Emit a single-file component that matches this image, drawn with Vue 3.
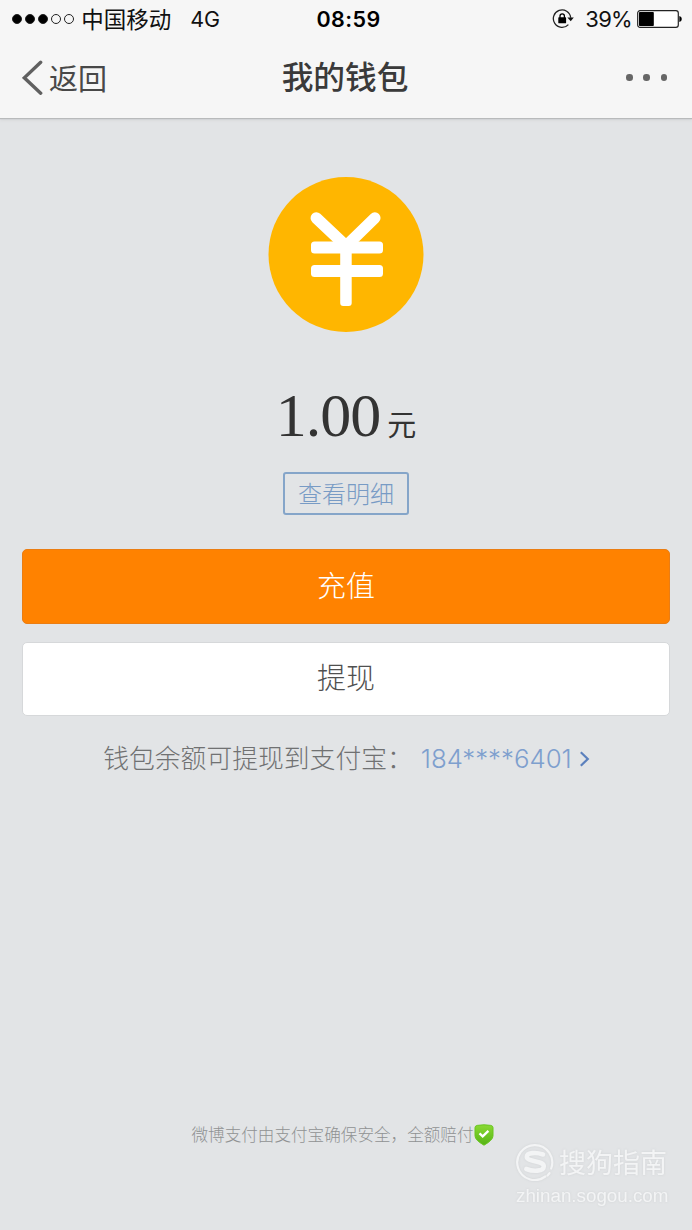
<script setup>
const signals = [true, true, true, false, false]
const battery = 39
</script>

<template>
  <div class="screen">
    <header class="header">
      <div class="status">
        <div class="side">
          <div class="signals">
            <i v-for="(on, n) in signals" :key="n" class="signal" :class="{ on }"></i>
          </div>
          <span class="carrier">中国移动</span>
          <span class="network">4G</span>
        </div>
        <span class="clock">08:59</span>
        <div class="side right">
          <svg class="lock" width="22" height="20" viewBox="0 0 22 20">
            <path d="M16.400 15.600A8.700 8.700 0 1 1 18.700 8.700" fill="none" stroke="#222" stroke-width="1.300" />
            <path d="M15.400 8.400h6.400l-3.100 3.800z" fill="#111" />
            <rect x="6.300" y="8.300" width="7.800" height="6" rx=".6" fill="#000" />
            <path d="M8 9V7a2.200 2.200 0 0 1 4.400 0v2" fill="none" stroke="#000" stroke-width="1.300" />
          </svg>
          <span class="percent">{{ battery }}%</span>
          <svg class="battery" width="46" height="18" viewBox="0 0 46 18">
            <rect x=".7" y=".7" width="40.600" height="16.600" rx="2.400" fill="#fff" stroke="#222" stroke-width="1.200" />
            <rect x="2" y="2" :width="battery * 0.38" height="14" rx=".8" />
            <path d="M42.300 6q2.500.4 2.500 3t-2.500 3z" />
          </svg>
        </div>
      </div>
      <nav class="nav">
        <a class="back">
          <svg width="22" height="36" viewBox="0 0 22 36">
            <path d="M18.700 2.300 2.300 17.800 18.700 33.200" fill="none" stroke="#606060" stroke-width="3.400" stroke-linecap="round" />
          </svg>
          <span>返回</span>
        </a>
        <h1>我的钱包</h1>
        <div class="more"><i></i><i></i><i></i></div>
      </nav>
    </header>

    <main class="wallet">
      <svg class="coin" width="156" height="156" viewBox="0 0 156 156">
        <circle cx="78" cy="77.500" r="77.500" fill="#ffb600" />
        <path d="M48.300 41 78 69 106.800 41" fill="none" stroke="#fff" stroke-width="11.500" stroke-linecap="round" />
        <rect x="43" y="64.500" width="72" height="12" rx="3.500" fill="#fff" />
        <rect x="43" y="88" width="72" height="12" rx="3.500" fill="#fff" />
        <rect x="72.200" y="66" width="11.500" height="63" rx="3" fill="#fff" />
      </svg>
      <div class="amount"><span class="number">1.00</span><span class="unit">元</span></div>
      <a class="detail">查看明细</a>
      <button class="action primary">充值</button>
      <button class="action">提现</button>
      <p class="account">
        <span>钱包余额可提现到支付宝：</span>
        <a class="phone">184****6401</a>
        <svg class="arrow" width="11" height="17" viewBox="0 0 11 17">
          <path d="m1.800 1.300 7 6.700-7 6.700" fill="none" stroke="#5b80bd" stroke-width="2.200" />
        </svg>
      </p>
    </main>

    <footer class="footer">
      <span>微博支付由支付宝确保安全，全额赔付</span>
      <svg width="20" height="22" viewBox="0 0 20 22">
        <defs>
          <linearGradient id="shield" x1="0" y1="0" x2="0" y2="1">
            <stop offset="0" stop-color="#8ad934" />
            <stop offset="1" stop-color="#55b315" />
          </linearGradient>
        </defs>
        <path d="M3.200 1.400Q10 .2 16.800 1.400q2.200.4 2.200 2.200v8.200q0 4.300-9 9.400-9-5.100-9-9.400V3.600q0-1.800 2.200-2.200z" fill="url(#shield)" stroke="#68c51f" />
        <path d="m5.500 9.300 3.200 3 5.700-5.500" fill="none" stroke="#fff" stroke-width="2.300" />
      </svg>
    </footer>

    <div class="watermark">
      <div class="brand">
        <svg width="38" height="38" viewBox="0 0 38 38" fill="none" stroke="#f3f4f5" stroke-linecap="round">
          <path d="M29.300 33.500A17.500 17.500 0 1 1 35.200 25.500M31.500 32.500l2-2.300" stroke-width="2.200" />
          <path d="M27 11.500C20 9 10.500 9.500 10.800 14.200c.3 4.600 17 3.400 17 9 0 5.500-11 5.300-17.500 2.800" stroke-width="4.600" />
        </svg>
        <span>搜狗指南</span>
      </div>
      <div class="site">zhinan.sogou.com</div>
    </div>
  </div>
</template>

<style>
body {
  margin: 0;
}
</style>

<style scoped>
.screen {
  position: relative;
  display: flex;
  flex-direction: column;
  width: 692px;
  height: 1230px;
  overflow: hidden;
  background: #e2e4e6;
  font-family: Inter, "Noto Sans CJK SC", sans-serif;
  color: #333;
}

.header {
  height: 118px;
  box-sizing: border-box;
  flex: none;
  background: #f6f6f6;
  box-shadow: 0 1px 1px #b8babb, 0 2px 3px #d2d4d5;
}

.status {
  display: grid;
  grid-template-columns: 1fr auto 1fr;
  align-items: center;
  height: 38px;
  padding: 0 9px 0 12px;
  color: #111;
  font-size: 22px;
  line-height: 38px;
}

.side {
  display: flex;
  align-items: center;
}

.right {
  justify-content: flex-end;
}

.signals {
  display: flex;
  gap: 2.800px;
  margin-right: 7px;
}

.signal {
  width: 10.200px;
  height: 10.200px;
  box-sizing: border-box;
  border: 1px solid #222;
  border-radius: 50%;
}

.signal.on {
  background: #000;
}

.carrier {
  padding-top: 1px;
  font-size: 22.500px;
  line-height: 37px;
}

.network {
  margin-left: 19px;
  font-size: 21.500px;
}

.clock {
  padding-left: 2px;
  font-size: 21.500px;
  font-weight: 600;
  letter-spacing: .4px;
  color: #000;
}

.lock {
  margin-right: 11px;
}

.percent {
  margin-right: 5px;
  font-size: 22px;
  letter-spacing: -.7px;
}

.nav {
  display: grid;
  grid-template-columns: 1fr auto 1fr;
  align-items: center;
  height: 79px;
  padding: 0 25px 0 22px;
}

.back {
  display: flex;
  align-items: center;
  gap: 5px;
  font-size: 29px;
  line-height: 40px;
  color: #484848;
}

.back span {
  padding-top: 4px;
}

.nav h1 {
  margin: 0;
  padding: 1px 0 0 1px;
  font-size: 31.700px;
  font-weight: 500;
  line-height: 42px;
  color: #3a3a3a;
}

.more {
  display: flex;
  justify-content: flex-end;
  gap: 10.700px;
}

.more i {
  width: 6.500px;
  height: 6.500px;
  border-radius: 50%;
  background: #666;
}

.wallet {
  display: flex;
  flex-direction: column;
  align-items: center;
  padding: 59px 22px 0;
}

.amount {
  display: flex;
  align-items: baseline;
  gap: 7px;
  height: 72px;
  margin-top: 46px;
  line-height: 72px;
}

.number {
  font-family: "Liberation Serif", serif;
  font-size: 62px;
  letter-spacing: -1px;
}

.unit {
  font-size: 29px;
}

.detail {
  width: 126px;
  height: 43px;
  margin-top: 21px;
  box-sizing: border-box;
  border: 2px solid #85a5c9;
  border-radius: 3px;
  text-align: center;
  font-size: 24px;
  font-weight: 300;
  line-height: 41px;
  color: #789bc5;
}

.action {
  width: 648px;
  height: 74px;
  margin: 18px 0 0;
  padding: 0;
  border: 1px solid #d6d8da;
  border-radius: 5px;
  background: #fff;
  font-family: inherit;
  font-size: 29px;
  font-weight: 300;
  line-height: 70px;
  color: #505050;
}

.primary {
  height: 75px;
  margin-top: 34px;
  border-color: #ea7d13;
  background: #ff8200;
  color: #fff;
}

.account {
  display: flex;
  align-items: center;
  margin: 23px 0 0;
  padding-left: 1px;
  font-size: 25.800px;
  font-weight: 300;
  line-height: 40px;
  color: #707172;
}

.phone {
  margin-left: 8px;
  color: #7e9fce;
}

.arrow {
  margin-left: 7px;
}

.footer {
  display: flex;
  align-items: center;
  justify-content: center;
  height: 24px;
  margin: auto 0 83px;
  padding-right: 7px;
  font-size: 16.600px;
  font-weight: 300;
  line-height: 24px;
  color: #909293;
}

/* Translucent stamp lying over the page corner */
.watermark {
  position: absolute;
  right: 23px;
  bottom: 22px;
  width: 153px;
  color: #f3f4f5;
  filter: drop-shadow(0 0 1px #d0d2d4);
}

.brand {
  display: flex;
  align-items: center;
  gap: 5px;
  height: 38px;
  font-size: 27px;
  line-height: 38px;
  white-space: nowrap;
}

.brand svg {
  flex: none;
}

.brand span {
  padding-top: 3px;
}

.site {
  margin-top: 3px;
  font-family: "Liberation Sans", sans-serif;
  font-size: 18.800px;
  line-height: 24px;
  white-space: nowrap;
}
</style>
